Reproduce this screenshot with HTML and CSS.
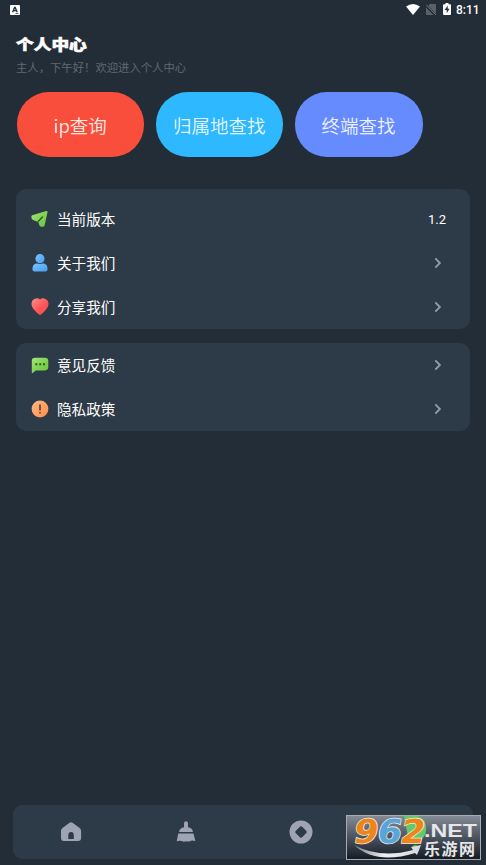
FILE: index.html
```html
<!DOCTYPE html>
<html lang="zh-CN">
<head>
<meta charset="utf-8">
<title>个人中心</title>
<link rel="stylesheet" href="styles.css">
</head>
<body>
<div class="screen">
  <header class="status">
    <svg class="status-app" width="10" height="10" viewBox="0 0 10 10"><rect width="10" height="10" rx="1" fill="#fff"/><path d="M2.6 7.2 4.6 2.4h.6l2 4.8M3.4 5.6h3" fill="none" stroke="#232d38" stroke-width="1.3"/><path d="M5.5 8.5h3" stroke="#232d38" stroke-width=".7"/></svg>
    <div class="status-right">
      <svg width="14" height="11" viewBox="0 0 14 11"><path d="M0 2.5Q7-2.5 14 2.5L7 11Z" fill="#fff"/></svg>
      <svg class="sim" width="10" height="11" viewBox="0 0 10 11"><path d="M3.5 0H9q1 0 1 1v9L2.5 2ZM0 3.5 7.5 11H1q-1 0-1-1Z" fill="#59616a"/><path d="M.2.8 9.8 10.8" stroke="#747b82" stroke-width="1"/></svg>
      <svg class="battery" width="8" height="12" viewBox="0 0 8 12"><path d="M2.5 0h3v1.2H7q1 0 1 1V11q0 1-1 1H1q-1 0-1-1V2.200q0-1 1-1h1.500Z" fill="#fff"/><path d="M4.700 2.500 1.700 7h2v3.200L6.500 5.700h-1.800Z" fill="#232d38"/></svg>
      <span class="clock">8:11</span>
    </div>
  </header>

  <h1 class="title">个人中心</h1>
  <p class="greeting">主人，下午好！欢迎进入个人中心</p>

  <nav class="actions">
    <a class="pill red">ip查询</a>
    <a class="pill blue">归属地查找</a>
    <a class="pill indigo">终端查找</a>
  </nav>

  <svg width="0" height="0" class="defs">
    <defs>
      <linearGradient id="green" x2="1" y2="1"><stop stop-color="#a4e678"/><stop offset=".45" stop-color="#84d656"/><stop offset="1" stop-color="#68c43c"/></linearGradient>
      <linearGradient id="azure" x2="1" y2="1"><stop stop-color="#80c4ff"/><stop offset="1" stop-color="#429cf4"/></linearGradient>
      <linearGradient id="rose" x2="1" y2="1"><stop stop-color="#ff8c8a"/><stop offset=".5" stop-color="#ff5b5b"/><stop offset="1" stop-color="#fa4147"/></linearGradient>
      <linearGradient id="peach" x2="1" y2="1"><stop stop-color="#ffb987"/><stop offset="1" stop-color="#ff8d48"/></linearGradient>
      <symbol id="chevron" viewBox="0 0 8 12"><path d="M1.300 1.400 5.900 6 1.300 10.600" fill="none" stroke="#989da1" stroke-width="1.800"/></symbol>
    </defs>
  </svg>

  <section class="card first">
    <div class="row">
      <svg class="icon" viewBox="0 0 18 18"><path d="M1.300 5.300 15.200 1.100q1.500-.3 1.300 1.200L13.700 15.300q-.5 1.500-2 1.500h-1.200q-1.500 0-2-1.400L7.300 11.900l-4.800-1.700Q0 9 .3 6.600q.1-1 1-1.300Z" fill="url(#green)"/><path d="m7.400 11.200 4-4.300" stroke="#2d5a32" stroke-width="1.400" stroke-linecap="round"/></svg>
      <span class="label">当前版本</span><span class="version">1.2</span>
    </div>
    <div class="row">
      <svg class="icon" viewBox="0 0 18 18"><path d="M5 9.500h8q3.500 1 3.500 5v1q0 2-2 2h-11q-2 0-2-2v-1q0-4 3.500-5Z" fill="url(#azure)"/><circle cx="9" cy="5" r="5.100" fill="#2d3a47"/><circle cx="9" cy="4.700" r="4.600" fill="url(#azure)"/></svg>
      <span class="label">关于我们</span><svg class="arrow"><use href="#chevron"/></svg>
    </div>
    <div class="row">
      <svg class="icon" viewBox="0 0 18 18"><path d="M9 1.400C11-.6 15 .2 16.700 2.800c1.400 2.700.8 5.600-1.200 8.300-1.400 1.900-3.200 3.700-5.100 5.200q-1.400 1-2.800 0C5.600 14.800 3.900 13 2.500 11.100.5 8.400-.2 5.500 1.300 2.800 3 .2 7-.6 9 1.400Z" fill="url(#rose)"/></svg>
      <span class="label">分享我们</span><svg class="arrow"><use href="#chevron"/></svg>
    </div>
  </section>

  <section class="card">
    <div class="row">
      <svg class="icon" viewBox="0 0 18 18"><path d="M4 1.800h10q3.300 0 3.300 3.300v6q0 3.300-3.300 3.300H4.800L1.700 17q-.9.500-.9-.6V5.100Q.8 1.800 4 1.800Z" fill="url(#green)"/><path d="M4.300 7.300h2v2h-2zM8.200 7.300h2v2h-2zM12 7.300h2v2h-2z" fill="#31552f"/></svg>
      <span class="label">意见反馈</span><svg class="arrow"><use href="#chevron"/></svg>
    </div>
    <div class="row">
      <svg class="icon" viewBox="0 0 18 18"><circle cx="9" cy="9" r="8.400" fill="url(#peach)"/><path d="M9 4.500v6M9 12v1.500" stroke="#603b2c" stroke-width="1.600"/></svg>
      <span class="label">隐私政策</span><svg class="arrow"><use href="#chevron"/></svg>
    </div>
  </section>

  <nav class="tabs">
    <svg width="22" height="22" viewBox="0 0 22 22"><path d="M9.500 1.700q1.500-1 3 0l7.100 5.200q1.500 1.100 1.500 3V17q0 3-3 3H4q-3 0-3-3V9.900q0-1.900 1.500-3ZM8.300 18h5.500v-4q0-3-2.700-3t-2.800 3Z" fill="#9fa4b5" fill-rule="evenodd"/></svg>
    <svg width="22" height="22" viewBox="0 0 22 22"><path d="M9 2.500Q9 .3 11 .3t2 2.200v3.700q4.500.4 4.900 4.800H4.100Q4.500 6.600 9 6.200ZM3.300 12.500h15.200L20.300 20q-4-.9-5 .1-2.200.9-4.300.2-2.100.9-4.300-.2-2-.6-5 .1Z" fill="#9fa4b5"/></svg>
    <svg width="24" height="24" viewBox="0 0 24 24"><path d="M12 .5a11.500 11.500 0 1 0 0 23 11.500 11.500 0 0 0 0-23ZM11.100 6.600q.9-.8 1.800 0l4.500 4.500q.8.900 0 1.800l-4.500 4.500q-.9.800-1.800 0l-4.500-4.500q-.8-.9 0-1.800Z" fill="#9fa4b5" fill-rule="evenodd"/></svg>
    <span class="tab-space"></span>
  </nav>

  <aside class="watermark">
    <svg width="135" height="45" viewBox="0 0 135 45">
      <defs>
        <linearGradient id="plate" x2="0" y2="1"><stop stop-color="#858b97"/><stop offset=".5" stop-color="#4b535f"/><stop offset="1" stop-color="#131a22"/></linearGradient>
        <linearGradient id="swoosh"><stop stop-color="#777e87"/><stop offset=".45" stop-color="#eef0f2"/><stop offset="1" stop-color="#d5d8dc"/></linearGradient>
      </defs>
      <rect x=".5" y=".5" width="134" height="44" fill="url(#plate)" stroke="#a8acb2"/>
      <path d="M58 .5h9q11 0 13 10v5q0 7-9 12h-8Z" fill="#65c969"/><circle cx="69" cy="32" r="2.500" fill="#38a54b"/>
      <path d="M8 30q26 14 59 5l-2-3 10-2-4 10-2-2Q30 50 8 30Z" fill="url(#swoosh)"/>
      <g class="logo-number" transform="translate(0 28) skewX(-10) scale(1.060 1)">
        <text x="6" y="0" fill="#ee8518">9</text>
        <text x="28" y="0" fill="#58a5da">6</text>
        <text x="50" y="0" fill="#ee8518">2</text>
      </g>
      <text class="logo-net" x="78" y="21.500" textLength="53" lengthAdjust="spacingAndGlyphs">.NET</text>
      <text class="logo-cn" x="78" y="39.500" textLength="51">乐游网</text>
    </svg>
  </aside>
</div>
</body>
</html>
```
FILE: styles.css
```css
* { box-sizing: border-box; }

body {
  margin: 0;
  background: #232d38;
  color: #fff;
  font-family: Roboto, "Noto Sans CJK SC", sans-serif;
}

.screen {
  position: relative;
  display: flex;
  flex-direction: column;
  width: 486px;
  height: 865px;
  padding: 0 16px;
  overflow: hidden;
}

.status {
  display: flex;
  justify-content: space-between;
  align-items: center;
  height: 20px;
  margin: 0 -9px 0 -6px;
}

.status-right { display: flex; align-items: center; }
.status-right svg { position: relative; top: -1px; }
.sim { margin-left: 6px; }
.battery { margin-left: 7px; }
.clock { margin-left: 5px; width: 23px; font-size: 12px; line-height: 20px; font-weight: 500; white-space: nowrap; }

.title {
  width: max-content;
  margin: 12px 0 0;
  font: 900 17.700px/22px "Noto Sans CJK SC", sans-serif;
  -webkit-text-stroke: .7px #fff;
  transform: scaleY(.82);
}

.greeting {
  margin: 4px 0 0;
  color: #606970;
  font: 400 11.350px/18px "Noto Sans CJK SC", sans-serif;
}

.actions { display: flex; gap: 12px; margin: 16px 0 0 1px; }

.pill {
  width: 127.200px;
  height: 65px;
  border-radius: 32px;
  font: 350 18.500px/66px "Noto Sans CJK SC", sans-serif;
  text-align: center;
  text-indent: -1px;
  color: rgba(255, 255, 255, .9);
}
.red { background: #f94e3b; }
.blue { background: #2db8ff; }
.indigo { background: #668bff; }

.defs { position: absolute; }

.card {
  margin-top: 14px;
  border-radius: 10px;
  background: #2d3a47;
}
.card.first { margin-top: 32px; padding-top: 8px; }

.row {
  display: flex;
  align-items: center;
  height: 44px;
  padding: 0 24px 0 15px;
}
.icon { width: 18px; height: 18px; }
.label { flex: 1; margin-left: 8px; font: 400 14.600px/44px "Noto Sans CJK SC", sans-serif; }
.version { font-size: 13px; }
.arrow { width: 8px; height: 12px; margin-right: 4px; }

.tabs {
  display: grid;
  grid-template-columns: repeat(4, 1fr);
  align-items: center;
  justify-items: center;
  height: 54px;
  margin: auto -3px 6px;
  border-radius: 9px;
  background: #2d3a47;
}

.watermark {
  position: absolute;
  left: 346px;
  top: 815px;
  width: 135px;
  height: 45px;
}
.watermark svg { display: block; overflow: visible; }
.logo-number { font: 700 33px "DejaVu Sans", sans-serif; stroke: #f4eee5; stroke-width: 1.500px; paint-order: stroke; }
.logo-net { font: 700 18px "Liberation Sans", sans-serif; fill: #e4e6e8; }
.logo-cn { font: 700 16px "Noto Sans CJK SC", sans-serif; fill: #e4e6e8; }
```
